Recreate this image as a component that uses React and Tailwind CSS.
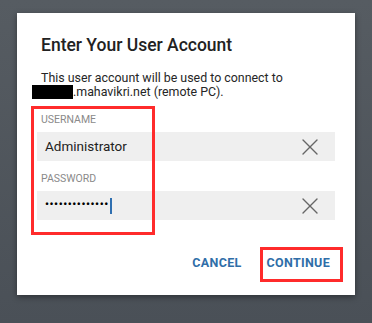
import { X } from 'lucide-react'

export default function App() {
  return (
    <div className="h-[323px] w-full bg-gradient-to-b from-[#565c62] to-[#4a5057] pt-[13px] pl-[17px]" style={{ fontFamily: 'Roboto, "Liberation Sans", sans-serif' }}>
      <div className="relative w-[338px] h-[282px] bg-white shadow-[0_2px_6px_rgba(0,0,0,0.4)]">
        <div className="pt-[20px] px-[24px]">
          <h1 className="text-[17.5px] leading-[24px] text-[#222] font-medium">Enter Your User Account</h1>
          <p className="mt-[14px] text-[12.4px] leading-[14px] text-[#262626]">
            This user account will be used to connect to<br />
            <span className="inline-block w-[41px] h-[14px] bg-black -ml-[9px] align-[-3px]"></span>.mahavikri.net (remote PC).
          </p>
        </div>

        <div className="px-[20px] mt-[14px]">
          <div className="pl-[4px] text-[10.5px] leading-[14px] text-[#8a8a8a]">USERNAME</div>
          <div className="mt-[5px] h-[29px] bg-[#efefef] flex items-center justify-between pl-[8px] pr-[11px]">
            <span className="text-[13.5px] text-[#222]">Administrator</span>
            <X size={28} strokeWidth={1.2} className="text-[#666]" />
          </div>

          <div className="mt-[11px] pl-[4px] text-[10.5px] leading-[14px] text-[#8a8a8a]">PASSWORD</div>
          <div className="mt-[5px] h-[29px] bg-[#efefef] flex items-center justify-between pl-[8px] pr-[11px]">
            <div className="flex items-center">
              <span className="text-[11px] font-bold tracking-[0.6px] text-black">••••••••••••••</span>
              <span className="ml-[1px] w-[2px] h-[16px] bg-[#2f6fb0]"></span>
            </div>
            <X size={28} strokeWidth={1.2} className="text-[#666]" />
          </div>
        </div>

        <div className="flex justify-end items-center gap-[25px] pr-[25px] mt-[34px]">
          <button className="text-[12.5px] font-bold text-[#2f6ea8] tracking-wide">CANCEL</button>
          <button className="text-[12.5px] font-bold text-[#2f6ea8] tracking-wide">CONTINUE</button>
        </div>

        {/* annotation boxes */}
        <div className="absolute left-[14px] top-[93px] w-[124px] h-[129px] border-[3px] border-[#ff2b2b]"></div>
        <div className="absolute left-[243px] top-[234px] w-[83px] h-[35px] border-[3px] border-[#ff2b2b]"></div>
      </div>
    </div>
  )
}
